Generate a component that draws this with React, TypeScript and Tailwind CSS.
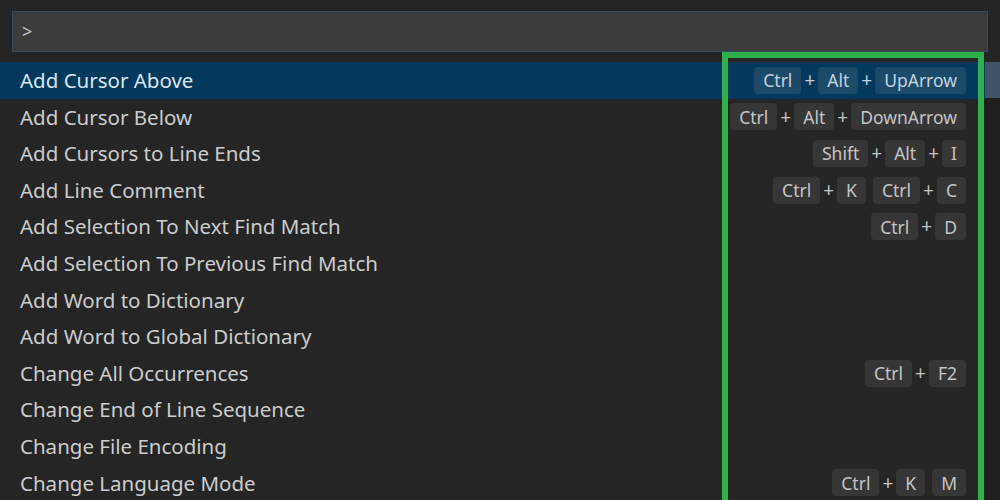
const commands: { label: string; keys?: string[][] }[] = [
  { label: "Add Cursor Above", keys: [["Ctrl", "Alt", "UpArrow"]] },
  { label: "Add Cursor Below", keys: [["Ctrl", "Alt", "DownArrow"]] },
  { label: "Add Cursors to Line Ends", keys: [["Shift", "Alt", "I"]] },
  { label: "Add Line Comment", keys: [["Ctrl", "K"], ["Ctrl", "C"]] },
  { label: "Add Selection To Next Find Match", keys: [["Ctrl", "D"]] },
  { label: "Add Selection To Previous Find Match" },
  { label: "Add Word to Dictionary" },
  { label: "Add Word to Global Dictionary" },
  { label: "Change All Occurrences", keys: [["Ctrl", "F2"]] },
  { label: "Change End of Line Sequence" },
  { label: "Change File Encoding" },
  { label: "Change Language Mode", keys: [["Ctrl", "K"], ["M"]] },
]

function Key({ name, selected }: { name: string; selected: boolean }) {
  return (
    <span
      className={
        "h-[27px] px-[9px] rounded-[4px] flex items-center " +
        (selected ? "bg-[#1c4a6b] text-[#c3d2de]" : "bg-[#363636] text-[#c4c4c4]")
      }
    >
      {name}
    </span>
  )
}

function Shortcut({ chords, selected }: { chords: string[][]; selected: boolean }) {
  return (
    <div className="flex items-center gap-[7px] text-[17.5px]">
      {chords.map((chord, ci) => (
        <div key={ci} className="flex items-center gap-[3px]">
          {chord.map((k, ki) => (
            <div key={ki} className="flex items-center gap-[3px]">
              {ki > 0 && (
                <span className={"text-[19px] " + (selected ? "text-[#c3d2de]" : "text-[#c4c4c4]")}>+</span>
              )}
              <Key name={k} selected={selected} />
            </div>
          ))}
        </div>
      ))}
    </div>
  )
}

export default function App() {
  return (
    <div
      className="relative w-[1000px] h-[500px] overflow-hidden bg-[#252526] text-[20.5px]"
      style={{ fontFamily: '"Noto Sans", "Open Sans", sans-serif' }}
    >
      {/* Quick input */}
      <div className="pt-[11px] pl-[12px] pr-[12px] pb-[10px]">
        <div className="h-[41px] bg-[#3c3c3c] border border-[#3d4c59] flex items-center pl-[9px] text-[#c8c8c8] text-[18px]">
          &gt;
        </div>
      </div>

      {/* Command list */}
      <div className="flex flex-col pr-[15px]">
        {commands.map((c, i) => {
          const selected = i === 0
          return (
            <div
              key={c.label}
              className={
                "h-[36.6px] flex items-center justify-between pl-[20px] pr-[19px] " +
                (selected ? "bg-[#04395e] text-[#dbe6ef]" : "text-[#cccccc]")
              }
            >
              <span className="leading-none">{c.label}</span>
              {c.keys && <Shortcut chords={c.keys} selected={selected} />}
            </div>
          )
        })}
      </div>

      {/* scrollbar track and slider */}
      <div className="absolute right-0 top-[62px] bottom-0 w-[15px] bg-[#1f1f1f]" />
      <div className="absolute right-0 top-[62px] w-[15px] h-[36px] bg-[#3f5567]" />

      {/* highlight annotation */}
      <div className="absolute left-[722px] top-[52px] w-[262px] h-[460px] border-[6px] border-[#2db24e]" />
    </div>
  )
}
